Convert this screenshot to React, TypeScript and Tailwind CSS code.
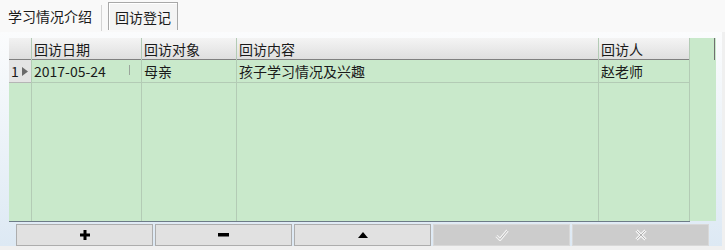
import React from "react"

const cols = [
  { title: "回访日期", w: "w-[110px]" },
  { title: "回访对象", w: "w-[95px]" },
  { title: "回访内容", w: "w-[362px]" },
  { title: "回访人", w: "w-[91px]" },
]

const row = ["2017-05-24", "母亲", "孩子学习情况及兴趣", "赵老师"]

function ToolButton({ children, disabled }: { children: React.ReactNode; disabled?: boolean }) {
  return (
    <div
      className={
        "flex h-[22px] w-[137px] items-center justify-center border " +
        (disabled ? "border-[#d8d8d8] bg-[#cccccc]" : "border-[#adadad] bg-[#e1e1e1]")
      }
    >
      {children}
    </div>
  )
}

export default function App() {
  return (
    <div className="h-[250px] w-[725px] overflow-hidden bg-[#f0f0f0] font-['Noto_Sans_CJK_SC',sans-serif] text-[14px] text-[#1a1a1a]">
      {/* tabs */}
      <div className="flex h-[32px] items-start bg-[#f9f9f9]">
        <div className="pl-[8px] pt-[6px] text-[14px] leading-[20px]">学习情况介绍</div>
        <div className="ml-[9px] mt-[5px] h-[26px] w-px bg-[#d4d4d4]" />
        <div className="ml-[6px] mt-[2px] h-[28px] border border-b-0 border-[#a8a8a8] bg-[#f4f4f4] px-[6px] pt-[4px] text-[14px] leading-[20px] shadow-[inset_1px_1px_0_#ffffff]">
          回访登记
        </div>
      </div>

      {/* panel */}
      <div className="h-[214px] w-[722px] bg-gradient-to-b from-[#fbfcfd] to-[#dde9f4] pl-[9px] pt-[6px]">
        <div className="relative flex h-[183px] w-[707px] bg-[#c9e9cb]">
          {/* row header column */}
          <div className="flex w-[23px] flex-col border-r border-[#b3cbb5]">
            <div className="h-[22px] border-b border-[#808080] bg-gradient-to-b from-[#f2f2f2] to-[#dedede]" />
            <div className="flex h-[23px] items-center border-b border-[#b5b5b5] bg-[#e4e4e4] pl-[2px]">
              <span className="leading-none">1</span>
              <svg className="ml-[3px]" width="6" height="9" viewBox="0 0 6 9">
                <path d="M0 0 L6 4.5 L0 9 Z" fill="#6a6a6a" />
              </svg>
            </div>
          </div>

          {cols.map((c, i) => (
            <div key={c.title} className={"flex flex-col border-r border-[#b3cbb5] " + c.w}>
              <div className="flex h-[22px] items-center border-b border-[#808080] bg-gradient-to-b from-[#f4f4f4] to-[#dfdfdf] pl-[2px] leading-none">
                {c.title}
              </div>
              <div className="relative flex h-[23px] items-center border-b border-[#b3cbb5] pl-[2px] leading-none">
                {row[i]}
                {i === 0 && <div className="absolute left-[97px] top-[5px] h-[10px] w-px bg-[#9aa59b]" />}
              </div>
            </div>
          ))}

          <div className="flex flex-1 flex-col">
            <div className="h-[22px] w-[25px] border-r border-[#6f6f6f]" />
          </div>
        </div>

        {/* bottom line */}
        <div className="h-px w-[681px] bg-[#6d7c88]" />

        {/* buttons */}
        <div className="ml-[7px] mt-[2px] flex gap-[2px]">
          <ToolButton>
            <svg width="10" height="10" viewBox="0 0 10 10">
              <path d="M3.5 0 H6.5 V3.5 H10 V6.5 H6.5 V10 H3.5 V6.5 H0 V3.5 H3.5 Z" fill="#000" />
            </svg>
          </ToolButton>
          <ToolButton>
            <svg width="11" height="4" viewBox="0 0 11 4">
              <rect width="11" height="3.5" fill="#000" />
            </svg>
          </ToolButton>
          <ToolButton>
            <svg width="10" height="6" viewBox="0 0 10 6">
              <path d="M5 0 L10 6 L0 6 Z" fill="#000" />
            </svg>
          </ToolButton>
          <ToolButton disabled>
            <svg width="14" height="12" viewBox="0 0 14 12">
              <path d="M1.5 7 L5 10.5 L12.5 1.5" fill="none" stroke="#f4f4f4" strokeWidth="3" />
              <path d="M1.5 7 L5 10.5 L12.5 1.5" fill="none" stroke="#b4b4b4" strokeWidth="1" />
            </svg>
          </ToolButton>
          <ToolButton disabled>
            <svg width="12" height="12" viewBox="0 0 12 12">
              <path d="M1.5 1.5 L10.5 10.5 M10.5 1.5 L1.5 10.5" fill="none" stroke="#f4f4f4" strokeWidth="3" />
              <path d="M1.5 1.5 L10.5 10.5 M10.5 1.5 L1.5 10.5" fill="none" stroke="#b4b4b4" strokeWidth="1" />
            </svg>
          </ToolButton>
        </div>
      </div>
    </div>
  )
}
